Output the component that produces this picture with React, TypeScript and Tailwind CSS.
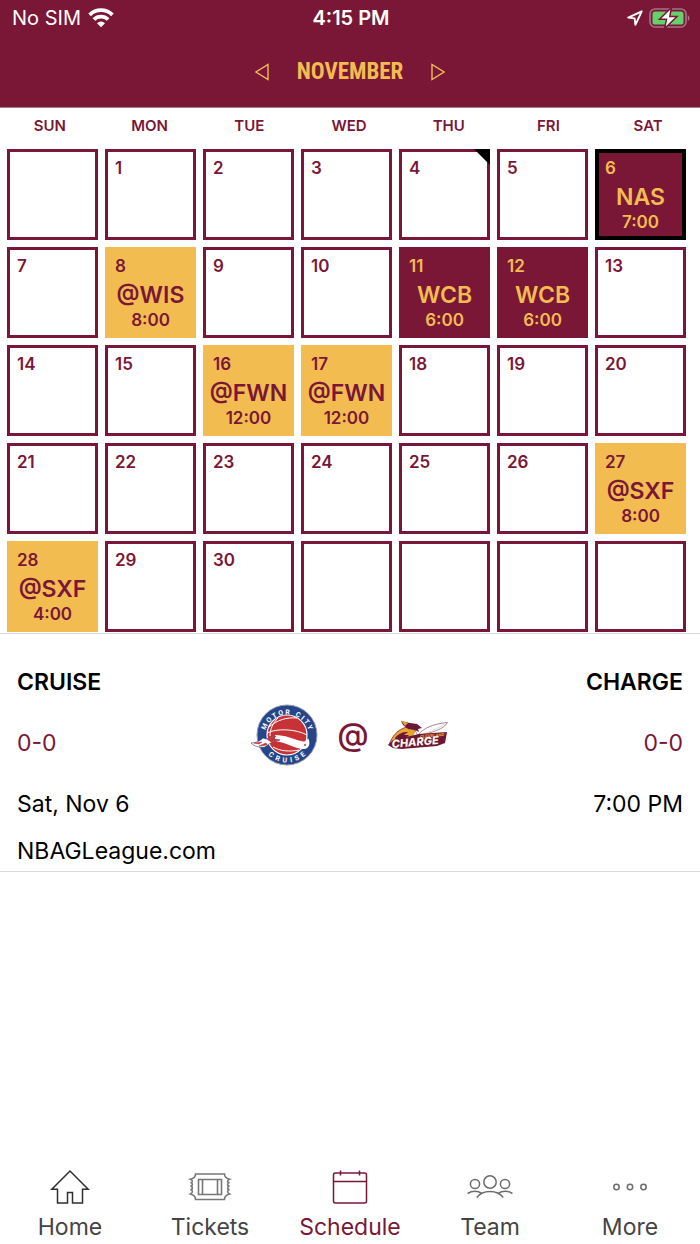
import { useState } from "react";

type Game = { opponent: string; time: string; home: boolean };
type Tab = "Home" | "Tickets" | "Schedule" | "Team" | "More";

const WEEKDAYS = ["SUN", "MON", "TUE", "WED", "THU", "FRI", "SAT"];
const TABS: Tab[] = ["Home", "Tickets", "Schedule", "Team", "More"];
const TODAY = 4;
const DAYS_IN_MONTH = 30;

const GAMES: Record<number, Game> = {
  6: { opponent: "NAS", time: "7:00", home: true },
  8: { opponent: "@WIS", time: "8:00", home: false },
  11: { opponent: "WCB", time: "6:00", home: true },
  12: { opponent: "WCB", time: "6:00", home: true },
  16: { opponent: "@FWN", time: "12:00", home: false },
  17: { opponent: "@FWN", time: "12:00", home: false },
  27: { opponent: "@SXF", time: "8:00", home: false },
  28: { opponent: "@SXF", time: "4:00", home: false },
};

// ── status bar ────────────────────────────────────────────────────────────────
function StatusBar() {
  return (
    <div className="grid h-9 grid-cols-3 items-center pl-3 pr-[10px] text-xl text-white">
      <div className="flex items-center gap-[7px]">
        <span>No SIM</span>
        <svg width="26" height="20" viewBox="0 0 26 20" fill="none" stroke="#fff" strokeWidth="3.8">
          <path d="M1.6 6.8a16.4 16.4 0 0 1 22.8 0" />
          <path d="M5.9 11.5a10.2 10.2 0 0 1 14.2 0" />
          <path d="M9 15.200a5.800 5.800 0 0 1 8 0L13 19.200z" fill="#fff" stroke="none" />
        </svg>
      </div>
      <span className="text-center font-semibold">4:15 PM</span>
      <div className="flex items-center justify-end gap-1.5">
        <svg width="16" height="16" viewBox="0 0 16 16" fill="none" stroke="#fff" strokeWidth="1.9" strokeLinejoin="round">
          <path d="M14.700 1.300 1.200 7.600l6.400.8.8 6.400z" />
        </svg>
        <svg width="41" height="22" viewBox="0 0 41 22">
          <rect x="1" y="2" width="36" height="18" rx="5" fill="none" stroke="#a8718a" strokeWidth="1.600" />
          <path d="M38.800 8.200c2.200.8 2.200 4.800 0 5.600z" fill="#a8718a" />
          <rect x="3.500" y="4.500" width="31" height="13" rx="2.600" fill="#65d16a" />
          <path d="M22.500.5 10.500 12.200h7L15.600 21.500 28 9.600h-7.200z" fill="#fff" stroke="#7a1737" strokeWidth="1.500" />
        </svg>
      </div>
    </div>
  );
}

// ── calendar cell ─────────────────────────────────────────────────────────────
function DayCell({ day, selected, onSelect }: { day: number | null; selected: boolean; onSelect: () => void }) {
  const game = day ? GAMES[day] : undefined;

  let tone = "border-3 border-[#7a1737] bg-white text-[#7a1737]";
  if (game) {
    tone = game.home
      ? "border-4 border-[#7a1737] bg-[#7a1737] text-[#f3bc51]"
      : "border-4 border-[#f3bc51] bg-[#f3bc51] text-[#7a1737]";
  }
  if (selected) tone = "border-4 border-black bg-[#7a1737] text-[#f3bc51]";

  if (!day) return <div className="aspect-square border-3 border-[#7a1737]" />;

  return (
    <button type="button" onClick={onSelect} className={`relative aspect-square text-center ${tone}`}>
      <span className="absolute inset-0 flex flex-col">
        <span className={`text-left text-[17px] font-semibold leading-6 ${game ? "pl-[6px] pt-[3px]" : "pl-[7px] pt-1"}`}>{day}</span>
        {game && <span className="-mx-1 text-[23px] font-semibold leading-[34px]">{game.opponent}</span>}
        {game && <span className="text-[17px] font-semibold leading-4">{game.time}</span>}
      </span>
      {day === TODAY && (
        <svg className="absolute -right-[3px] -top-[3px]" width="16" height="16" viewBox="0 0 16 16">
          <path d="M0 0h16v16z" fill="#000" />
        </svg>
      )}
    </button>
  );
}

// ── team logos ────────────────────────────────────────────────────────────────
function CruiseLogo() {
  return (
    <svg width="68" height="62" viewBox="0 0 68 62" role="img" aria-label="Motor City Cruise">
      <circle cx="36" cy="31" r="30" fill="#25468b" stroke="#9a9ea8" strokeWidth="1" />
      <circle cx="36" cy="31" r="20" fill="#c73237" stroke="#fff" strokeWidth="1.200" />
      <g fill="none" stroke="#fff" strokeWidth="1">
        <path d="M18 23c8-7 18-10 28-9" />
        <path d="M16 29c10-5 29-4 40 2" />
        <path d="M27 14c-5 5-8 11-8 18" />
        <path d="M22 43c7 4 16 5 26 3" />
      </g>
      {/* exhaust pipe wrapping the ball */}
      <path d="M24 31c10 0 18 4 26 6 4 1 6 0 7-3 3 5 1 11-4 11-9 0-18-7-29-8z" fill="#fff" />
      <path d="M0 39c5 0 9-2 12-5l3 1 9-3-2 3 7 1-8 2-7 5c-6 1-11-1-14-4z" fill="#fff" stroke="#25468b" strokeWidth=".6" />
      <path d="M3 39l8-1-3 2zM8 42l7-3 1 2zM16 35l9-3-3 3 6 1-8 2z" fill="#c73237" stroke="#c73237" strokeWidth=".6" />
      <circle cx="54" cy="41" r="1" fill="#c73237" />
      <defs>
        <path id="cruise-top" d="M13.500 33a22.500 22.500 0 1 1 45 0" />
        <path id="cruise-bottom" d="M8.500 31a27.500 27.500 0 0 0 55 0" />
      </defs>
      <g className="font-['Roboto',sans-serif]" fill="#fff" fontSize="7" fontWeight="700" textAnchor="middle">
        <text><textPath href="#cruise-top" startOffset="50%">M O T O R&#160; &#160;C I T Y</textPath></text>
        <text><textPath href="#cruise-bottom" startOffset="50%">C&#160; R&#160; U&#160; I&#160; S&#160; E</textPath></text>
      </g>
    </svg>
  );
}

function ChargeLogo() {
  return (
    <svg width="62" height="30" viewBox="0 0 62 30" role="img" aria-label="Cleveland Charge">
      <path d="M31 15c6-7 14-11 29.500-12.500C57 9 45 13 31 15.500z" fill="#fff" stroke="#9a6474" strokeWidth=".8" />
      <path d="M32 15c8-2 18-6 26-11" fill="none" stroke="#c9aeb6" strokeWidth=".5" />
      <path d="M2 25c3-9 9-16 18-18l8 3 3 7-9 4-14 1z" fill="#e7a52f" stroke="#6b1738" strokeWidth=".7" />
      <path d="M14 1l9 2 7 1 5 4-4 1 1 3-4-2-7-1-5-4z" fill="#6b1738" />
      <path d="M14 .500l7 2.500-3 3z" fill="#e7a52f" />
      <path d="M8 18c4-5 8-6 13-6l-4 3h5l-3 3 7-1-3 3-13 2z" fill="#6b1738" />
      <path d="M26 16l3-5 1 5z" fill="#fff" />
      <path d="M32 14l28-2-2 11-8 3-36 3-8-1-5-3 5-5z" fill="#6b1738" />
      <text x="33" y="18" fontSize="4" fontWeight="800" fontStyle="italic" fill="#e7a52f" transform="rotate(-5 33 18)">CLEVELAND</text>
      <text x="5" y="28" fontSize="11" fontWeight="800" fontStyle="italic" fill="#fff8e6" transform="rotate(-5 5 28)">CHARGE</text>
    </svg>
  );
}

// ── tab bar icons ─────────────────────────────────────────────────────────────
function TabIcon({ tab }: { tab: Tab }) {
  switch (tab) {
    case "Home":
      return (
        <svg width="46" height="36" viewBox="0 0 46 36" fill="none" stroke="#303030" strokeWidth="1.500">
          <path d="M23 2 4.800 20.200h5.700V34h10V23.500h5V34h10V20.200h5.700z" />
        </svg>
      );
    case "Tickets":
      return (
        <svg width="46" height="36" viewBox="0 0 46 36" fill="none" stroke="#777" strokeWidth="1.600">
          <path d="M8.500 5h29c0 3 2 4.500 5 5.200-2.500 1-2.500 3.400 0 3.400-2.500.8-2.500 3.400 0 3.400-2.500.8-2.500 3.400 0 3.400-2.500.8-2.500 3.400 0 4.600-3 .7-5 2.500-5 5.500h-29c0-3-2-4.800-5-5.500 2.500-1.200 2.500-3.800 0-4.600 2.500 0 2.500-2.600 0-3.400 2.500 0 2.500-2.600 0-3.400 2.500 0 2.500-2.400 0-3.400 3-.7 5-2.200 5-5.200z" />
          <path d="M11.500 10.500h23v15h-23zM15.500 10.500v15M30.500 10.500v15" />
        </svg>
      );
    case "Schedule":
      return (
        <svg width="46" height="36" viewBox="0 0 46 36" fill="none" stroke="#7a1737" strokeWidth="1.500">
          <rect x="6.500" y="4" width="33" height="30" rx="2" />
          <path d="M6.500 12.500h33M13.500 1.500v5M32.500 1.500v5" />
        </svg>
      );
    case "Team":
      return (
        <svg width="46" height="36" viewBox="0 0 46 36" fill="none" stroke="#6c6c6c" strokeWidth="1.500">
          <circle cx="23" cy="13" r="6.200" />
          <circle cx="8" cy="15" r="4.600" />
          <circle cx="38" cy="15" r="4.600" />
          <path d="M9.800 28.500c6-8 20.400-8 26.400 0M.6 24.500c4.500-2.800 10-2.800 14.400 0M31 24.500c4.400-2.800 9.900-2.800 14.400 0" />
        </svg>
      );
    case "More":
      return (
        <svg width="46" height="36" viewBox="0 0 46 36" fill="none" stroke="#6c6c6c" strokeWidth="1.500">
          <circle cx="9.500" cy="18" r="2.700" />
          <circle cx="23" cy="18" r="2.700" />
          <circle cx="36.500" cy="18" r="2.700" />
        </svg>
      );
  }
}

export default function App() {
  const [selected, setSelected] = useState(6);
  const [tab, setTab] = useState<Tab>("Schedule");

  // the month starts on a Monday, so the first cell stays empty
  const cells = Array.from({ length: 35 }, (_, i) => (i >= 1 && i <= DAYS_IN_MONTH ? i : null));

  return (
    <div className="flex min-h-screen flex-col bg-white font-['Inter',sans-serif] text-black">
      <header className="border-b border-[#a8798a] bg-[#7a1737]">
        <StatusBar />
        <div className="flex h-[71px] items-center justify-center gap-7 text-[#f3bc51]">
          <button type="button" aria-label="Previous month">
            <svg width="14" height="18" viewBox="0 0 14 18" fill="none" stroke="currentColor" strokeWidth="1.400">
              <path d="M13 1.500v15L1 9z" />
            </svg>
          </button>
          <h1 className="font-['Liberation_Sans_Narrow','Roboto_Condensed','Open_Sans_Condensed','Roboto',sans-serif] text-[23px] font-bold leading-9">NOVEMBER</h1>
          <button type="button" aria-label="Next month">
            <svg width="14" height="18" viewBox="0 0 14 18" fill="none" stroke="currentColor" strokeWidth="1.400">
              <path d="M1 1.500v15L13 9z" />
            </svg>
          </button>
        </div>
      </header>

      {/* Calendar */}
      <div className="grid grid-cols-7 pb-[9px] pr-[2px] pt-1 text-center text-[15px] font-semibold leading-7 text-[#7a1737]">
        {WEEKDAYS.map(d => <span key={d}>{d}</span>)}
      </div>
      <div className="grid grid-cols-7 gap-[7px] pl-[7px] pr-[14px]">
        {cells.map((day, i) => (
          <DayCell key={i} day={day} selected={day !== null && day === selected} onSelect={() => day && setSelected(day)} />
        ))}
      </div>

      {/* Game details */}
      <section className="mt-px border-y border-[#d9d9d9] px-[17px] pb-1 pt-8 text-[23px] leading-8">
        <div className="flex justify-between font-semibold">
          <h2>CRUISE</h2>
          <h2>CHARGE</h2>
        </div>
        <div className="grid h-[74px] grid-cols-[1fr_auto_1fr] items-center text-[#7a1737]">
          <span className="pt-4">0-0</span>
          <div className="flex items-center gap-[18px]">
            <CruiseLogo />
            <span className="text-[32px] font-medium">@</span>
            <ChargeLogo />
          </div>
          <span className="pt-4 text-right">0-0</span>
        </div>
        <div className="flex justify-between pt-4">
          <span>Sat, Nov 6</span>
          <span>7:00 PM</span>
        </div>
        <p className="pt-[15px]">NBAGLeague.com</p>
      </section>

      {/* Tabs */}
      <nav className="mt-auto grid grid-cols-5">
        {TABS.map(t => (
          <button
            key={t}
            type="button"
            onClick={() => setTab(t)}
            className={`flex flex-col items-center gap-[5px] text-[23px] leading-[34px] ${t === tab ? "text-[#7a1737]" : "text-[#444]"}`}
          >
            <TabIcon tab={t} />
            {t}
          </button>
        ))}
      </nav>
    </div>
  );
}
